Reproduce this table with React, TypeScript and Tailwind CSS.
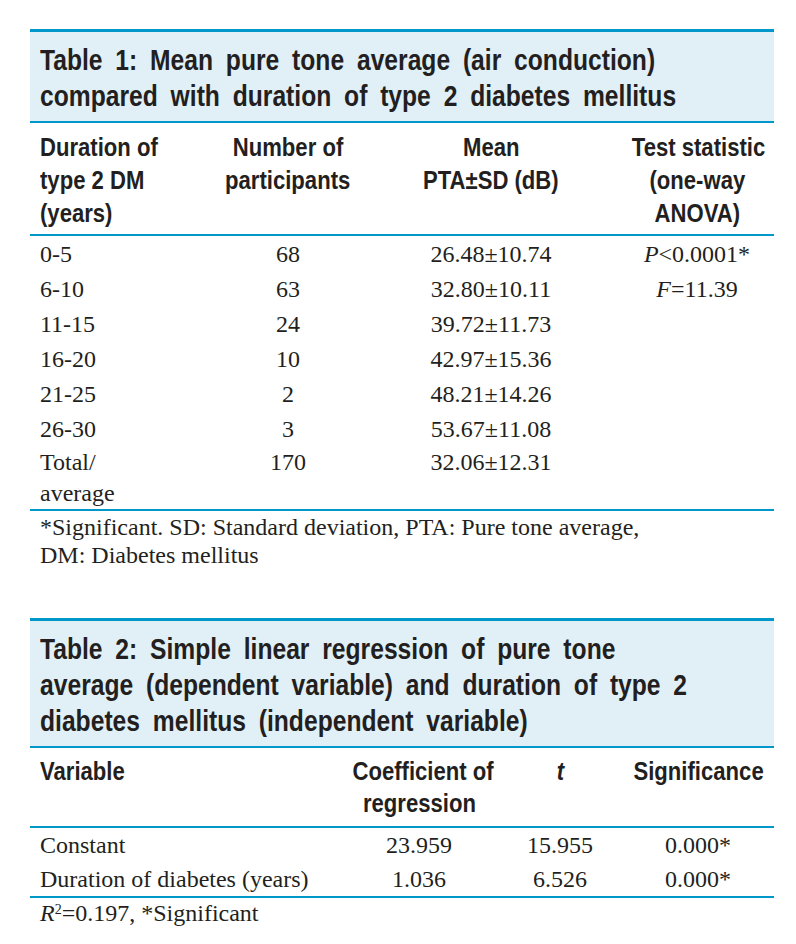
const narrow = "font-['Liberation_Sans','Arial',sans-serif] font-bold";
const serif = "font-['Liberation_Serif','Times_New_Roman',serif]";

// condensed bold line: Liberation Sans Bold squeezed to the width of Helvetica Condensed
function N({ children, center }: { children: React.ReactNode; center?: boolean }) {
  return (
    <div className={`whitespace-nowrap ${center ? "text-center" : ""}`}>
      <span className={`inline-block scale-x-[0.85] ${center ? "origin-center" : "origin-left"}`}>{children}</span>
    </div>
  );
}

const rows1 = [
  { dur: "0-5", n: "68", mean: "26.48±10.74", stat: <><i>P</i>&lt;0.0001*</> },
  { dur: "6-10", n: "63", mean: "32.80±10.11", stat: <><i>F</i>=11.39</> },
  { dur: "11-15", n: "24", mean: "39.72±11.73", stat: null },
  { dur: "16-20", n: "10", mean: "42.97±15.36", stat: null },
  { dur: "21-25", n: "2", mean: "48.21±14.26", stat: null },
  { dur: "26-30", n: "3", mean: "53.67±11.08", stat: null },
];

function TitleBox({ lines }: { lines: string[] }) {
  return (
    <div
      className={`border-t-[3px] border-b-2 border-[#0098cb] bg-[#e1f0f7] pl-[10px] pt-[10px] pb-[7px] text-[29px] leading-[36px] [word-spacing:7px] text-[#231f20] ${narrow}`}
    >
      {lines.map((l) => (
        <N key={l}>{l}</N>
      ))}
    </div>
  );
}

const cols1 = "grid grid-cols-[160px_196px_210px_178px]";
const cols2 = "grid grid-cols-[310px_158px_124px_152px]";

export default function App() {
  return (
    <div className="min-h-[944px] w-[796px] bg-white pt-[29px] text-[#231f20]">
      <div className="ml-[30px] w-[744px]">
        {/* table 1 */}
        <TitleBox
          lines={[
            "Table 1: Mean pure tone average (air conduction)",
            "compared with duration of type 2 diabetes mellitus",
          ]}
        />
        <div className={`${cols1} border-b-2 border-[#0098cb] pt-[8px] pb-[4px] text-[26px] leading-[33px] ${narrow}`}>
          <div className="pl-[10px]">
            <N>Duration of</N>
            <N>type 2 DM</N>
            <N>(years)</N>
          </div>
          <div>
            <N center>Number of</N>
            <N center>participants</N>
          </div>
          <div>
            <N center>Mean</N>
            <N center>PTA±SD (dB)</N>
          </div>
          <div className="pl-[24px]">
            <N center>Test statistic</N>
            <N center>(one-way</N>
            <N center>ANOVA)</N>
          </div>
        </div>
        <div className={`border-b-2 border-[#0098cb] text-[24px] ${serif}`}>
          {rows1.map((r) => (
            <div key={r.dur} className={`${cols1} py-[1.5px] leading-[32px]`}>
              <div className="pl-[10px]">{r.dur}</div>
              <div className="text-center">{r.n}</div>
              <div className="text-center">{r.mean}</div>
              <div className="pl-[24px] text-center">{r.stat}</div>
            </div>
          ))}
          <div className={`${cols1} pt-[1px] leading-[31px]`}>
            <div className="pl-[10px]">
              Total/
              <br />
              average
            </div>
            <div className="text-center">170</div>
            <div className="text-center">32.06±12.31</div>
            <div />
          </div>
        </div>
        <div className={`pl-[10px] pt-[2px] text-[24px] leading-[28px] ${serif}`}>
          *Significant. SD: Standard deviation, PTA: Pure tone average,
          <br />
          DM: Diabetes mellitus
        </div>

        {/* table 2 */}
        <div className="mt-[49px]">
          <TitleBox
            lines={[
              "Table 2: Simple linear regression of pure tone",
              "average (dependent variable) and duration of type 2",
              "diabetes mellitus (independent variable)",
            ]}
          />
        </div>
        <div className={`${cols2} border-b-2 border-[#0098cb] pt-[7px] pb-[7px] text-[26px] leading-[32px] ${narrow}`}>
          <div className="pl-[10px]">
            <N>Variable</N>
          </div>
          <div>
            <N center>Coefficient of</N>
            <N center>regression</N>
          </div>
          <div className="italic">
            <N center>t</N>
          </div>
          <div>
            <N center>Significance</N>
          </div>
        </div>
        <div className={`border-b-2 border-[#0098cb] text-[24px] leading-[34px] ${serif}`}>
          <div className={cols2}>
            <div className="pl-[10px]">Constant</div>
            <div className="text-center">23.959</div>
            <div className="text-center">15.955</div>
            <div className="text-center">0.000*</div>
          </div>
          <div className={cols2}>
            <div className="pl-[10px]">Duration of diabetes (years)</div>
            <div className="text-center">1.036</div>
            <div className="text-center">6.526</div>
            <div className="text-center">0.000*</div>
          </div>
        </div>
        <div className={`pl-[10px] pt-[1px] text-[24px] leading-[28px] ${serif}`}>
          <i>R</i>
          <sup className="text-[14px]">2</sup>=0.197, *Significant
        </div>
      </div>
    </div>
  );
}
